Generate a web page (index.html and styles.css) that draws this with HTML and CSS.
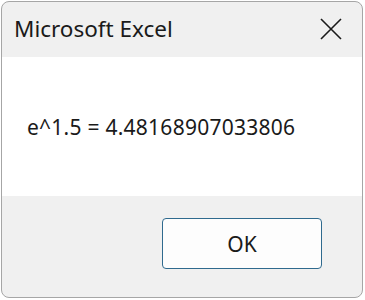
FILE: index.html
```html
<!DOCTYPE HTML>
<html>
<head>
	<meta charset="utf-8">
	<title>Microsoft Excel</title>
	<link rel="stylesheet" href="styles.css">
</head>
<body>
	<div class="dialog">
		<header class="title-bar">
			<span class="title">Microsoft Excel</span>
			<span class="close">
				<svg width="22" height="22" viewBox="0 0 22 22">
					<path d="M1 1 L21 21 M21 1 L1 21" stroke="#1a1a1a" stroke-width="1.6" fill="none"/>
				</svg>
			</span>
		</header>
		<section class="message">e^1.5 = 4.48168907033806</section>
		<footer class="buttons">
			<button class="btn">OK</button>
		</footer>
	</div>
</body>
</html>
```

FILE: styles.css
```css
	body{
		margin: 0;
		background-color: #fff;
		font-family: "Noto Sans", "Open Sans", sans-serif;
		color: #1a1a1a;
	}
	.dialog{
		margin: 1px 0 0 1px;
		width: 362px;
		height: 297px;
		box-sizing: border-box;
		border: 1px solid #a6a6a6;
		border-radius: 8px;
		overflow: hidden;
		display: flex;
		flex-direction: column;
		background: #f0f0f0;
	}
	.title-bar{
		height: 55px;
		display: flex;
		align-items: center;
		justify-content: space-between;
		padding: 0 20px 0 12px;
		flex-shrink: 0;
	}
	.title{
		font-size: 22.5px;
		padding-bottom: 2px;
	}
	.close{
		display: flex;
		padding-bottom: 1px;
	}
	.message{
		background: #fff;
		height: 139px;
		display: flex;
		align-items: center;
		padding-left: 25px;
		font-size: 21px;
		letter-spacing: 0.25px;
		flex-shrink: 0;
	}
	.buttons{
		flex: 1;
		display: flex;
		justify-content: flex-end;
		align-items: flex-start;
		padding: 22px 40px 0 0;
	}
	.btn{
		width: 160px;
		height: 51px;
		background: #fdfdfd;
		border: 1px solid #2f6a8e;
		border-radius: 4px;
		font-family: inherit;
		font-size: 21px;
		color: #1a1a1a;
	}
```
